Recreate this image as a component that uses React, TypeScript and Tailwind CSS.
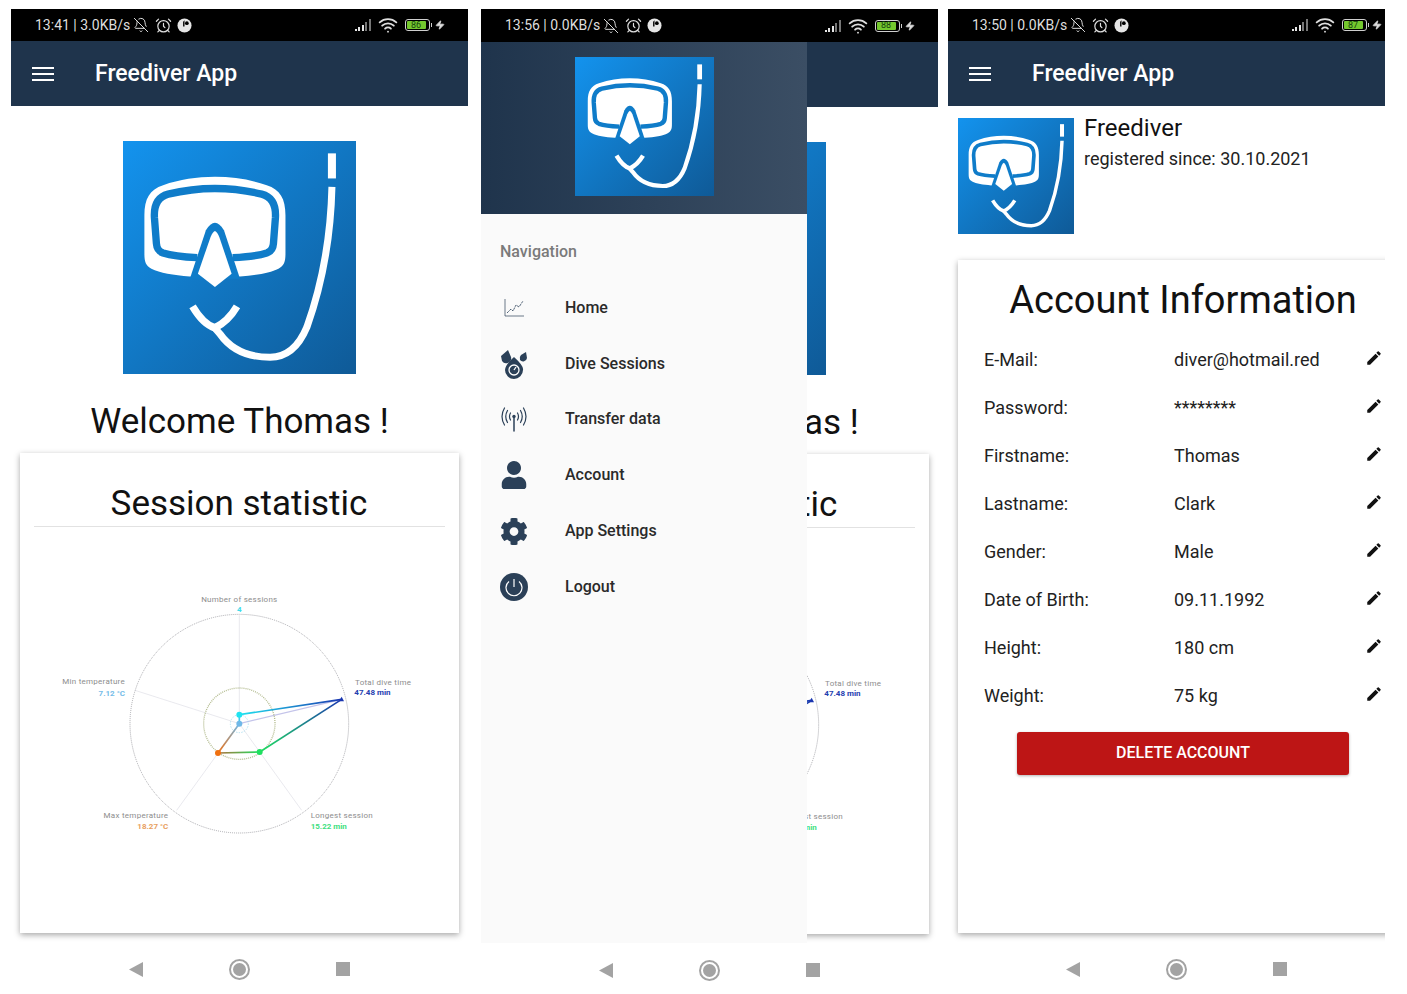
import { AlarmClock, BellOff, Wifi, Zap } from 'lucide-react';
import { FaCog, FaUser } from 'react-icons/fa';
import { MdEdit } from 'react-icons/md';

function Logo({ id, className }: { id: string; className: string }) {
  return (
    <svg viewBox="40 33 697 697" className={className}>
      <defs>
        <linearGradient id={id} x1="0" y1="0" x2="1" y2="1">
          <stop offset="0" stopColor="#1393ee" />
          <stop offset="1" stopColor="#0f5a97" />
        </linearGradient>
      </defs>
      <rect x="40" y="33" width="697" height="697" fill={`url(#${id})`} />
      {/* mask */}
      <path
        d="M240 438 C190 434 150 428 125 415 C108 405 104 395 104 370 L104 255 C104 205 120 178 160 165 C210 148 260 140 315 140 C370 140 420 148 470 165 C510 178 526 205 526 255 L526 370 C526 395 522 405 505 415 C480 428 440 434 390 438 Z"
        fill="#fff"
      />
      <path
        d="M262 382 C220 380 185 376 160 368 C146 363 141 355 140 340 L134 262 C132 225 145 200 175 192 C220 181 265 175 315 175 C365 175 410 181 455 192 C485 200 498 225 496 262 L490 340 C489 355 484 363 470 368 C445 376 410 380 368 382"
        fill="none"
        stroke="#0f7cc9"
        strokeWidth="22"
      />
      <path d="M240 445 L288 300 Q315 255 342 300 L390 445 Z" fill="#0f7cc9" />
      <path d="M315 302 Q322 305 328 320 L365 430 L315 470 L264 430 L302 320 Q308 305 315 302 Z" fill="#fff" />
      {/* snorkel */}
      <rect x="653" y="70" width="24" height="75" fill="#fff" />
      <path
        d="M665 170 C662 300 640 450 590 590 C565 650 530 680 480 680 C420 680 365 660 330 610 L308 585"
        fill="none"
        stroke="#fff"
        strokeWidth="21"
      />
      <path d="M248 528 C270 565 290 585 315 592 C340 580 365 555 381 528" fill="none" stroke="#fff" strokeWidth="22" />
    </svg>
  );
}

function RadarChart({ id }: { id: string }) {
  const cx = 598;
  const cy = 425;
  return (
    <svg viewBox="0 0 1200 780" className="h-[260px] w-[400px] shrink-0" fontFamily="Roboto, sans-serif">
      <defs>
        <linearGradient id={`${id}-a`} gradientUnits="userSpaceOnUse" x1="598" y1="398" x2="905" y2="352">
          <stop offset="0" stopColor="#1fe3f0" />
          <stop offset="1" stopColor="#1a36b0" />
        </linearGradient>
        <linearGradient id={`${id}-b`} gradientUnits="userSpaceOnUse" x1="905" y1="352" x2="659" y2="510">
          <stop offset="0" stopColor="#1a36b0" />
          <stop offset="1" stopColor="#1fe060" />
        </linearGradient>
        <linearGradient id={`${id}-c`} gradientUnits="userSpaceOnUse" x1="659" y1="510" x2="534" y2="513">
          <stop offset="0" stopColor="#1fe060" />
          <stop offset="1" stopColor="#b0703a" />
        </linearGradient>
        <linearGradient id={`${id}-d`} gradientUnits="userSpaceOnUse" x1="534" y1="513" x2="598" y2="425">
          <stop offset="0" stopColor="#f07010" />
          <stop offset="1" stopColor="#6fb8e8" />
        </linearGradient>
      </defs>
      <g stroke="#e4e4ea" strokeWidth="2.5">
        <line x1={cx} y1={cy} x2="598" y2="100" />
        <line x1={cx} y1={cy} x2="285" y2="325" />
        <line x1={cx} y1={cy} x2="410" y2="685" />
        <line x1={cx} y1={cy} x2="785" y2="685" />
      </g>
      <line x1={cx} y1={cy} x2="905" y2="352" stroke="#c4c4ea" strokeWidth="3.5" />
      <circle cx={cx} cy={cy} r="328" fill="none" stroke="#9a9aa0" strokeWidth="2.5" strokeDasharray="3 3" />
      <circle cx={cx} cy={cy} r="107" fill="none" stroke="#b5bd92" strokeWidth="4" strokeDasharray="3 3" />
      <circle cx={cx} cy={cy} r="27" fill="none" stroke="#9fd8ee" strokeWidth="2.5" strokeDasharray="4 4" />
      <g fill="none" strokeWidth="5">
        <line x1="598" y1="398" x2="905" y2="352" stroke={`url(#${id}-a)`} />
        <line x1="905" y1="352" x2="659" y2="510" stroke={`url(#${id}-b)`} />
        <line x1="659" y1="510" x2="534" y2="513" stroke={`url(#${id}-c)`} />
        <line x1="534" y1="513" x2="598" y2="425" stroke={`url(#${id}-d)`} />
        <line x1="598" y1="425" x2="598" y2="398" stroke="#3fc8ee" />
      </g>
      <circle cx="598" cy="398" r="9" fill="#1fe3f0" />
      <path d="M905 344 L912 358 L897 358 Z" fill="#1a36b0" />
      <circle cx="659" cy="510" r="9" fill="#1fe060" />
      <circle cx="534" cy="513" r="9" fill="#f07010" />
      <circle cx="598" cy="425" r="9" fill="#6fb8e8" />
      <g fontSize="24" fill="#8d8d8d" letterSpacing="0.8">
        <text x="598" y="60" textAnchor="middle">Number of sessions</text>
        <text x="945" y="310">Total dive time</text>
        <text x="255" y="306" textAnchor="end">Min temperature</text>
        <text x="385" y="709" textAnchor="end">Max temperature</text>
        <text x="812" y="709">Longest session</text>
      </g>
      <g fontSize="24" fontWeight="700">
        <text x="598" y="90" textAnchor="middle" fill="#3fdcea">4</text>
        <text x="943" y="340" fill="#2440b0">47.48 min</text>
        <text x="255" y="341" textAnchor="end" fill="#74bce8">7.12 °C</text>
        <text x="385" y="742" textAnchor="end" fill="#e8a060">18.27 °C</text>
        <text x="812" y="742" fill="#40e080">15.22 min</text>
      </g>
    </svg>
  );
}

function StatusBar({ time, speed, battery, tall }: { time: string; speed: string; battery: string; tall?: boolean }) {
  return (
    <div className={`flex w-[457px] shrink-0 items-center bg-black pl-[24px] text-[14px] text-[#dedede] ${tall ? 'h-[33px]' : 'h-[32px]'}`}>
      <span className="whitespace-nowrap">
        {time} | {speed}
      </span>
      <BellOff size={16} strokeWidth={1.5} className="ml-[3px]" />
      <AlarmClock size={17} strokeWidth={1.7} className="ml-[6px]" />
      <svg viewBox="0 0 16 16" className="ml-[5px] h-[15px] w-[15px]">
        <circle cx="8" cy="8" r="7.5" fill="#e6e6e6" />
        <path d="M8 2.5 V9 H6.5 V4 Z" fill="#000" />
        <circle cx="10.5" cy="5.5" r="2" fill="#000" />
      </svg>
      <div className="ml-auto mr-[23px] flex items-center">
        <div className="flex h-[12px] items-end gap-[1.5px]">
          <div className="h-[2px] w-[2px] bg-[#e6e6e6]" />
          <div className="h-[4px] w-[2px] bg-[#e6e6e6]" />
          <div className="h-[6px] w-[2px] bg-[#e6e6e6]" />
          <div className="h-[9px] w-[2px] bg-[#777]" />
          <div className="h-[12px] w-[2px] bg-[#777]" />
        </div>
        <Wifi size={20} strokeWidth={2.2} className="ml-[7px]" />
        <div className="ml-[7px] flex items-center">
          <div className="flex h-[12px] w-[25px] items-center rounded-[3px] border border-[#cfcfcf] p-[1px]">
            <div className="flex h-full w-[19px] items-center justify-center rounded-[1px] bg-[#74c82e] text-[9px] leading-none text-[#14410f]">
              {battery}
            </div>
          </div>
          <div className="ml-[1px] h-[4px] w-[1.5px] bg-[#cfcfcf]" />
        </div>
        <Zap size={10} fill="#dedede" stroke="#dedede" className="ml-[3px]" />
      </div>
    </div>
  );
}

function AppBar() {
  return (
    <div className="flex h-[65px] w-[457px] shrink-0 items-center bg-[#1f344c] pl-[21px] text-white">
      <div className="flex w-[22px] flex-col gap-[4px]">
        <div className="h-[2px] bg-white" />
        <div className="h-[2px] bg-white" />
        <div className="h-[2px] bg-white" />
      </div>
      <span className="ml-[41px] text-[23px] font-medium leading-none">Freediver App</span>
    </div>
  );
}

function NavBar() {
  return (
    <div className="flex w-[457px] flex-1 items-start justify-center gap-[86px] pt-[29px]">
      <svg viewBox="0 0 14 15" className="h-[15px] w-[14px]">
        <path d="M14 0 V15 L0 7.5 Z" fill="#a3a3a3" />
      </svg>
      <div className="-mt-[3px] flex h-[21px] w-[21px] items-center justify-center rounded-full border-2 border-[#a3a3a3]">
        <div className="h-[13px] w-[13px] rounded-full bg-[#a3a3a3]" />
      </div>
      <div className="h-[14px] w-[14px] bg-[#a3a3a3]" />
    </div>
  );
}

function HomeContent({ id }: { id: string }) {
  return (
    <div className="flex h-[827px] w-[457px] shrink-0 flex-col items-center pt-[35px]">
      <Logo id={`${id}-logo`} className="h-[233px] w-[233px] shrink-0" />
      <h1 className="mt-[26px] text-[35px] leading-[44px] text-[#111]">Welcome Thomas !</h1>
      <div className="mt-[9px] ml-[-1px] flex h-[481px] w-[439px] flex-col bg-white pt-[30px] shadow-[0_2px_6px_rgba(0,0,0,0.35)]">
        <h2 className="text-center text-[35px] leading-[42px] text-[#111]">Session statistic</h2>
        <div className="mx-[14px] mt-px h-px bg-[#e2e2e2]" />
        <div className="ml-[20px] mt-[55px]">
          <RadarChart id={id} />
        </div>
      </div>
    </div>
  );
}

function Phone1() {
  return (
    <div className="flex w-[457px] shrink-0 flex-col">
      <StatusBar time="13:41" speed="3.0KB/s" battery="86" />
      <AppBar />
      <HomeContent id="home" />
      <NavBar />
    </div>
  );
}

function DriveIcon({ children }: { children: React.ReactNode }) {
  return <div className="flex w-[28px] items-center justify-center text-[#2b4058]">{children}</div>;
}

const drawerItems = [
  {
    label: 'Home',
    icon: (
      <svg viewBox="0 0 20 18" className="h-[18px] w-[20px]" fill="none" stroke="#2b4058" strokeWidth="0.7">
        <path d="M1 0 V17 H20" />
        <path d="M3 14 L7 10 L9 12 L12 6 L15 8 L19 2" strokeWidth="0.8" strokeDasharray="2.5 0.8" />
      </svg>
    ),
  },
  {
    label: 'Dive Sessions',
    icon: (
      <svg viewBox="0 0 28 30" className="h-[30px] w-[28px]">
        <path d="M1 7 L8 1 L11 8 A5 5 0 0 1 2 12 Z" fill="#2b4058" />
        <path d="M26 3 L27 9 A4 4 0 0 1 20 11 Q19 8 21 6 Z" fill="#2b4058" />
        <path d="M14 8 Q24 17 23 21 A9 9 0 0 1 5 21 Q5 16 14 8 Z" fill="#2b4058" />
        <circle cx="14" cy="21" r="5" fill="none" stroke="#fff" strokeWidth="1.3" />
        <path d="M14 21 L16 18" stroke="#fff" strokeWidth="1.3" />
      </svg>
    ),
  },
  {
    label: 'Transfer data',
    icon: (
      <svg viewBox="0 0 28 26" className="h-[26px] w-[28px]" fill="none" stroke="#2b4058" strokeWidth="1.2" strokeLinecap="round">
        <path d="M14 12 V25" strokeWidth="1.5" />
        <circle cx="14" cy="10.5" r="1.7" fill="#2b4058" stroke="none" />
        <path d="M10.5 7 Q8.5 10.5 10.5 14 M17.5 7 Q19.5 10.5 17.5 14" />
        <path d="M7.5 4.5 Q4 10.5 7.5 16.5 M20.5 4.5 Q24 10.5 20.5 16.5" />
        <path d="M4.5 2 Q-0.5 10.5 4.5 19 M23.5 2 Q28.5 10.5 23.5 19" />
      </svg>
    ),
  },
  { label: 'Account', icon: <FaUser size={28} /> },
  { label: 'App Settings', icon: <FaCog size={29} /> },
  {
    label: 'Logout',
    icon: (
      <svg viewBox="0 0 28 28" className="h-[28px] w-[28px]" fill="none">
        <circle cx="14" cy="14" r="14" fill="#2b4058" />
        <path d="M9 8.5 A8 8 0 1 0 19 8.5" stroke="#fff" strokeWidth="1.2" />
        <path d="M14 6 V14" stroke="#fff" strokeWidth="1.2" />
      </svg>
    ),
  },
];

function Phone2() {
  return (
    <div className="relative flex w-[457px] shrink-0 flex-col">
      <StatusBar time="13:56" speed="0.0KB/s" battery="88" tall />
      <AppBar />
      <HomeContent id="behind" />
      <NavBar />
      {/* drawer lies over the home page */}
      <div className="absolute left-0 top-[33px] flex h-[901px] w-[326px] flex-col bg-[#fafafa]">
        <div className="flex h-[172px] shrink-0 justify-center bg-gradient-to-r from-[#1f344c] to-[#3b4e64] pt-[15px]">
          <Logo id="drawer-logo" className="h-[139px] w-[139px]" />
        </div>
        <div className="pl-[19px] pt-[27px] text-[16px] font-medium leading-[22px] text-[#7a7a7a]">Navigation</div>
        <div className="mt-[17px] flex flex-col">
          {drawerItems.map((item) => (
            <div key={item.label} className="flex h-[55.8px] items-center pl-[19px]">
              <DriveIcon>{item.icon}</DriveIcon>
              <span className="ml-[37px] text-[16px] font-medium text-[#2a2a2a]">{item.label}</span>
            </div>
          ))}
        </div>
      </div>
    </div>
  );
}

const accountRows = [
  ['E-Mail:', 'diver@hotmail.red'],
  ['Password:', '********'],
  ['Firstname:', 'Thomas'],
  ['Lastname:', 'Clark'],
  ['Gender:', 'Male'],
  ['Date of Birth:', '09.11.1992'],
  ['Height:', '180 cm'],
  ['Weight:', '75 kg'],
];

function Phone3() {
  return (
    <div className="flex w-[437px] shrink-0 flex-col overflow-hidden">
      <StatusBar time="13:50" speed="0.0KB/s" battery="87" />
      <AppBar />
      <div className="flex h-[827px] w-[457px] shrink-0 flex-col pl-[10px] pt-[12px]">
        <div className="flex">
          <Logo id="account-logo" className="h-[116px] w-[116px] shrink-0" />
          <div className="-mt-[4px] ml-[10px]">
            <div className="text-[24px] leading-[28px] text-[#111]">Freediver</div>
            <div className="mt-[6px] text-[18px] leading-[22px] text-[#222]">registered since: 30.10.2021</div>
          </div>
        </div>
        <div className="mt-[26px] h-[673px] w-[450px] shrink-0 bg-white pt-[18px] shadow-[0_2px_6px_rgba(0,0,0,0.35)]">
          <h2 className="text-center text-[38px] leading-[44px] text-[#111]">Account Information</h2>
          <div className="mt-[13px] flex flex-col pl-[26px]">
            {accountRows.map(([label, value]) => (
              <div key={label} className="flex h-[48.1px] items-center text-[18px] text-[#222]">
                <span className="w-[190px]">{label}</span>
                <span className="w-[191px]">{value}</span>
                <MdEdit size={18} className="-mt-[3px] text-[#111]" />
              </div>
            ))}
          </div>
          <button className="ml-[59px] mt-[12px] flex h-[43px] w-[332px] items-center justify-center rounded-[3px] bg-[#bd1515] text-[16px] font-medium text-white shadow-[0_1px_3px_rgba(0,0,0,0.3)]">
            DELETE ACCOUNT
          </button>
        </div>
      </div>
      <NavBar />
    </div>
  );
}

export default function App() {
  return (
    <div className="flex h-[994px] w-[1407px] overflow-hidden bg-white pl-[11px] pt-[9px] font-[Roboto,sans-serif]">
      <Phone1 />
      <div className="ml-[13px] flex">
        <Phone2 />
      </div>
      <div className="ml-[10px] flex">
        <Phone3 />
      </div>
    </div>
  );
}
